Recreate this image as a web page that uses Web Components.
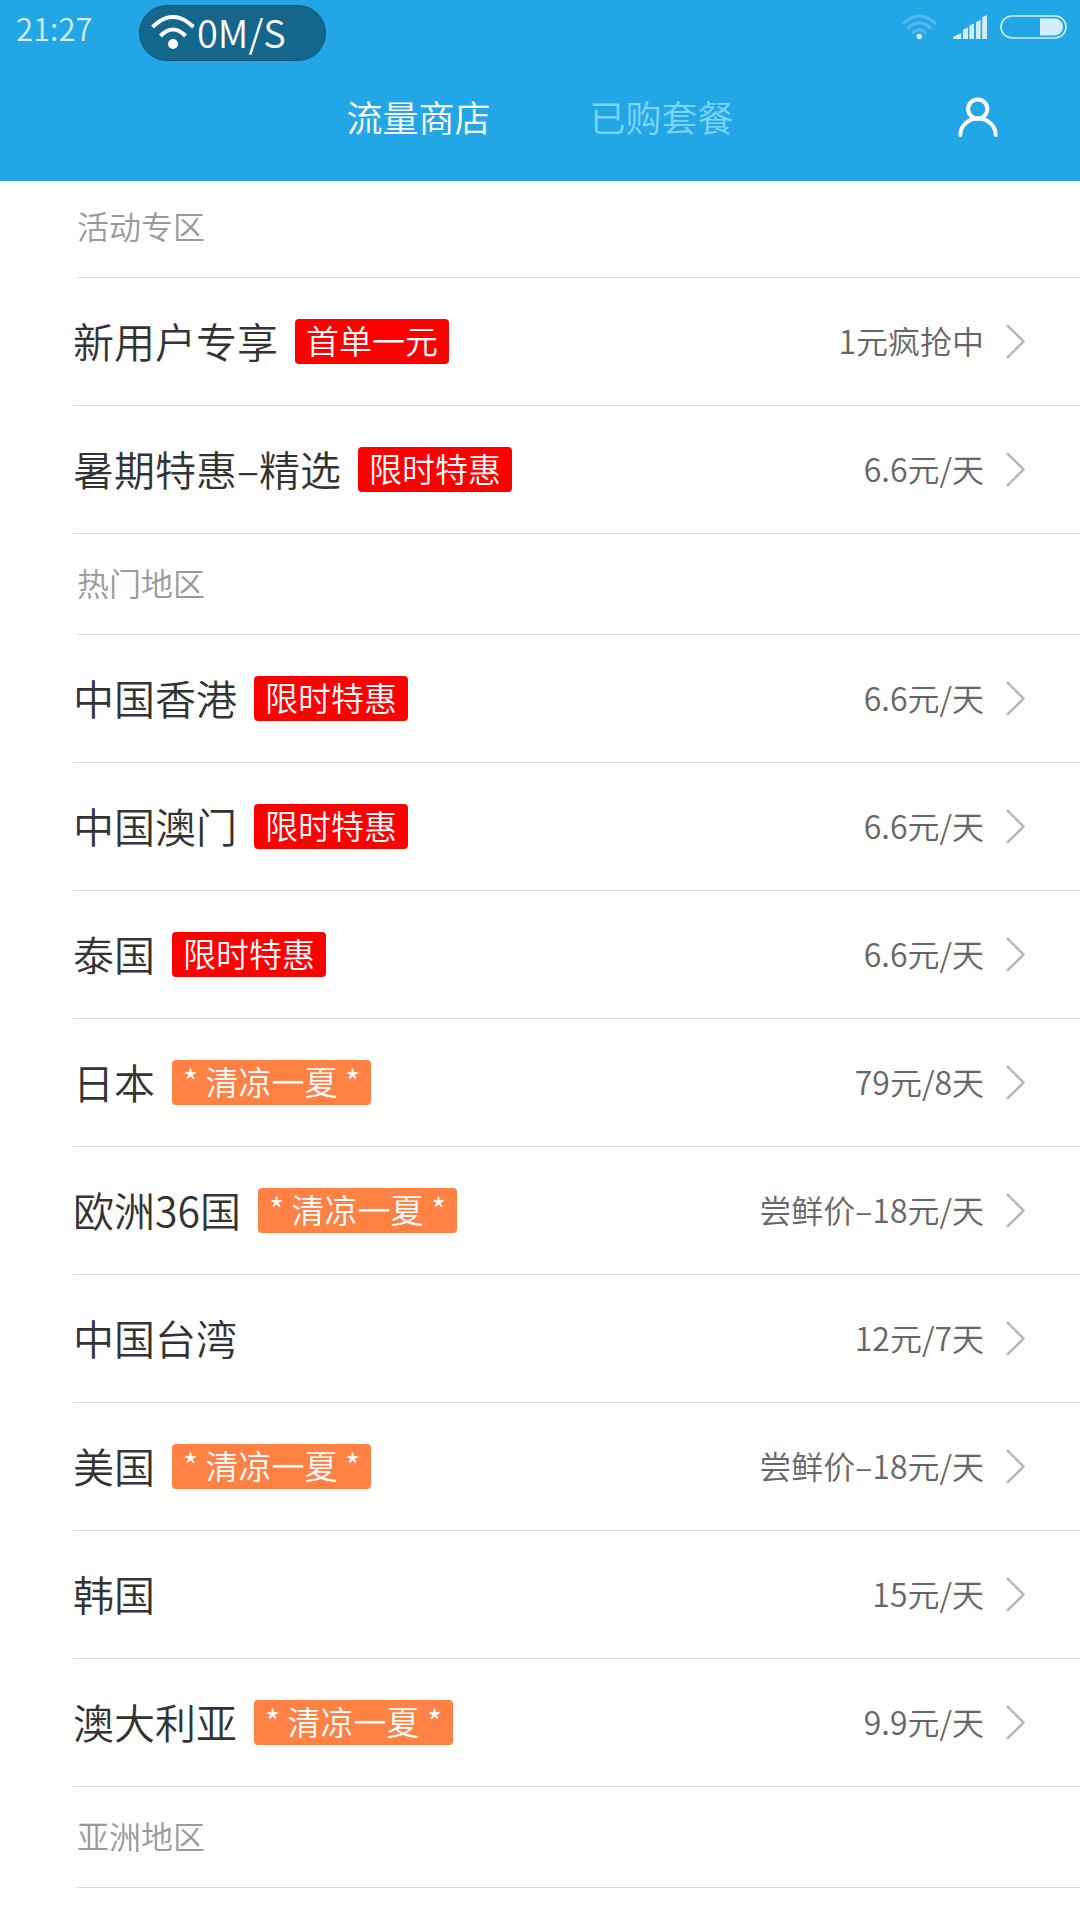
<!DOCTYPE html>
<html lang="zh-CN">
<head>
  <meta charset="UTF-8">
  <meta name="viewport" content="width=device-width, initial-scale=1">
  <title>流量商店</title>
  <style>
    :root {
      --brand: #23a6e5;
      --status: #d3edfb;
      --tab-off: #7dd6fa;
      --ink: #333;
      --price: #666;
      --muted: #999;
      --line: #d9d9d9;
      --hot: #f00;
      --summer: #ff8144;
    }

    body {
      margin: 0;
      background: #fff;
      color: var(--ink);
      font-family: "Noto Sans CJK SC", sans-serif;
      font-weight: 350;
    }
  </style>
</head>
<body>
  <shop-page>
    <shop-header slot="header">
      <status-bar slot="status" time="21:27" speed="0M/S"></status-bar>
      <shop-tab active>流量商店</shop-tab>
      <shop-tab>已购套餐</shop-tab>
    </shop-header>

    <region-group name="活动专区">
      <plan-row price="1元疯抢中">新用户专享<plan-badge slot="badge">首单一元</plan-badge></plan-row>
      <plan-row price="6.6元/天">暑期特惠–精选<plan-badge slot="badge">限时特惠</plan-badge></plan-row>
    </region-group>

    <region-group name="热门地区">
      <plan-row price="6.6元/天">中国香港<plan-badge slot="badge">限时特惠</plan-badge></plan-row>
      <plan-row price="6.6元/天">中国澳门<plan-badge slot="badge">限时特惠</plan-badge></plan-row>
      <plan-row price="6.6元/天">泰国<plan-badge slot="badge">限时特惠</plan-badge></plan-row>
      <plan-row price="79元/8天">日本<plan-badge slot="badge" kind="summer">* 清凉一夏 *</plan-badge></plan-row>
      <plan-row price="尝鲜价–18元/天">欧洲36国<plan-badge slot="badge" kind="summer">* 清凉一夏 *</plan-badge></plan-row>
      <plan-row price="12元/7天">中国台湾</plan-row>
      <plan-row price="尝鲜价–18元/天">美国<plan-badge slot="badge" kind="summer">* 清凉一夏 *</plan-badge></plan-row>
      <plan-row price="15元/天">韩国</plan-row>
      <plan-row price="9.9元/天">澳大利亚<plan-badge slot="badge" kind="summer">* 清凉一夏 *</plan-badge></plan-row>
    </region-group>

    <region-group name="亚洲地区"></region-group>
  </shop-page>

  <script>
    class ShopPage extends HTMLElement {
      constructor() {
        super();
        this.attachShadow({ mode: "open" });
        this.shadowRoot.innerHTML = /*html*/ `
          <style>
            :host {
              display: block;
            }

            /* the list is scrolled a touch under the header */
            main {
              margin-top: -4px;
            }
          </style>
          <slot name="header"></slot>
          <main><slot></slot></main>
        `;
      }
    }

    class ShopHeader extends HTMLElement {
      constructor() {
        super();
        this.attachShadow({ mode: "open" });
        this.shadowRoot.innerHTML = /*html*/ `
          <style>
            :host {
              display: block;
              position: relative;
              z-index: 1;
              background: var(--brand);
            }

            .bar {
              display: grid;
              grid-template-columns: 1fr auto 1fr;
              align-items: center;
              height: 125px;
            }

            nav {
              grid-column: 2;
              display: flex;
              gap: 99px;
              padding-bottom: 5px;
            }

            button {
              justify-self: end;
              margin-right: 80px;
              padding: 0;
              border: 0;
              background: none;
              cursor: pointer;
            }

            svg {
              display: block;
            }
          </style>
          <slot name="status"></slot>
          <div class="bar">
            <nav><slot></slot></nav>
            <button type="button" aria-label="我的">
              <svg width="42" height="44" viewBox="0 0 42 44" fill="none" stroke="#fff" stroke-width="4" stroke-linecap="round">
                <circle cx="19.7" cy="12" r="9.6"/>
                <path d="M2.3 38A17.7 16.4 0 0 1 37.7 38"/>
              </svg>
            </button>
          </div>
        `;
      }
    }

    class StatusBar extends HTMLElement {
      constructor() {
        super();
        this.attachShadow({ mode: "open" });
      }

      connectedCallback() {
        const time = this.getAttribute("time") ?? "";
        const speed = this.getAttribute("speed") ?? "";

        this.shadowRoot.innerHTML = /*html*/ `
          <style>
            :host {
              display: flex;
              align-items: center;
              height: 56px;
              padding: 0 13px 0 16px;
              color: var(--status);
            }

            svg {
              display: block;
            }

            time {
              min-width: 123px;
              font-size: 31px;
              line-height: 40px;
            }

            .speed {
              display: flex;
              align-items: center;
              gap: 2px;
              box-sizing: border-box;
              width: 187px;
              height: 56px;
              margin-top: 10px;
              padding-left: 11px;
              border: 1px solid #105577;
              border-radius: 28px;
              background: #14668c;
              color: #fff;
              font-size: 38px;
              line-height: 52px;
            }

            .speed span {
              padding-bottom: 3px;
            }

            .icons {
              display: flex;
              align-items: center;
              margin-left: auto;
              padding-bottom: 2px;
              gap: 12px;
            }
          </style>
          <time>${time}</time>
          <div class="speed">
            <svg width="44" height="36" viewBox="0 0 44 36" fill="none" stroke="#fff" stroke-width="4">
              <path d="M1.5 12Q22-8 42.5 12"/>
              <path d="M9.5 21Q22 8 34.5 21"/>
              <circle cx="22" cy="29" r="5" fill="#fff" stroke="none"/>
            </svg>
            <span>${speed}</span>
          </div>
          <div class="icons">
            <svg width="40" height="26" viewBox="0 0 40 26" fill="none" stroke="#52baeb" stroke-width="3">
              <path d="M1.7 10Q18.3-6 35 10"/>
              <path d="M6.3 14.7Q18.3 3 30.3 14.7"/>
              <path d="M11.5 19.5Q18.3 12 25.2 19.5"/>
              <circle cx="18.3" cy="22.5" r="2.8" fill="#d3edfb" stroke="none"/>
            </svg>
            <svg width="35" height="24" viewBox="0 0 35 24" fill="#d3edfb">
              <path d="M0 22L8.3 18V24H0zM10 14.7L15 12.3V24H10zM16.4 10.7L21 8.3V24H16.4zM23 7.3L27.6 4.7V24H23zM29.2 2.3L34 0V24H29.2z"/>
            </svg>
            <svg width="67" height="24" viewBox="0 0 67 24">
              <rect x="1" y="1" width="65" height="22" rx="11" fill="none" stroke="#d3edfb" stroke-width="1.6"/>
              <path d="M40 3.6H54.5A8.5 8.5 0 0 1 54.5 20.6H40z" fill="#d3edfb"/>
            </svg>
          </div>
        `;
      }
    }

    class ShopTab extends HTMLElement {
      constructor() {
        super();
        this.attachShadow({ mode: "open" });
        this.shadowRoot.innerHTML = /*html*/ `
          <style>
            :host {
              display: block;
            }

            button {
              display: block;
              padding: 0;
              border: 0;
              background: none;
              color: var(--tab-off);
              font: inherit;
              font-size: 36px;
              line-height: 48px;
              cursor: pointer;
            }

            :host([active]) button {
              color: #fff;
            }
          </style>
          <button type="button"><slot></slot></button>
        `;
      }
    }

    class RegionGroup extends HTMLElement {
      constructor() {
        super();
        this.attachShadow({ mode: "open" });
      }

      connectedCallback() {
        const name = this.getAttribute("name") ?? "";

        this.shadowRoot.innerHTML = /*html*/ `
          <style>
            :host {
              display: block;
            }

            h2 {
              margin: 0 0 0 77px;
              padding-bottom: 4px;
              border-bottom: 1px solid var(--line);
              color: var(--muted);
              font-size: 32px;
              font-weight: inherit;
              line-height: 96px;
            }
          </style>
          <section>
            <h2>${name}</h2>
            <slot></slot>
          </section>
        `;
      }
    }

    class PlanRow extends HTMLElement {
      constructor() {
        super();
        this.attachShadow({ mode: "open" });
      }

      connectedCallback() {
        const price = this.getAttribute("price") ?? "";

        this.shadowRoot.innerHTML = /*html*/ `
          <style>
            :host {
              display: block;
              margin-left: 73px;
              border-bottom: 1px solid var(--line);
            }

            a {
              display: flex;
              align-items: center;
              min-height: 127px;
              padding-right: 55px;
              color: var(--ink);
              text-decoration: none;
            }

            .name,
            .price {
              padding-bottom: 4px;
            }

            .name {
              margin-right: 17px;
              font-size: 41px;
              line-height: 60px;
            }

            .price {
              margin-left: auto;
              margin-right: 22px;
              color: var(--price);
              font-size: 32px;
              line-height: 48px;
            }

            svg {
              display: block;
            }
          </style>
          <a href="#">
            <span class="name"><slot></slot></span>
            <slot name="badge"></slot>
            <span class="price">${price}</span>
            <svg width="19" height="36" viewBox="0 0 19 36" fill="none" stroke="#b4b4b4" stroke-width="2.4">
              <path d="M1 1L17.5 17.5L1 34"/>
            </svg>
          </a>
        `;
      }
    }

    class PlanBadge extends HTMLElement {
      constructor() {
        super();
        this.attachShadow({ mode: "open" });
        this.shadowRoot.innerHTML = /*html*/ `
          <style>
            :host {
              display: block;
              padding: 0 11px 2px;
              border-radius: 4px;
              background: var(--hot);
              color: #fff;
              font-size: 33px;
              line-height: 43px;
            }

            :host([kind="summer"]) {
              background: var(--summer);
            }
          </style>
          <slot></slot>
        `;
      }
    }

    customElements.define("shop-page", ShopPage);
    customElements.define("shop-header", ShopHeader);
    customElements.define("status-bar", StatusBar);
    customElements.define("shop-tab", ShopTab);
    customElements.define("region-group", RegionGroup);
    customElements.define("plan-row", PlanRow);
    customElements.define("plan-badge", PlanBadge);
  </script>
</body>
</html>
